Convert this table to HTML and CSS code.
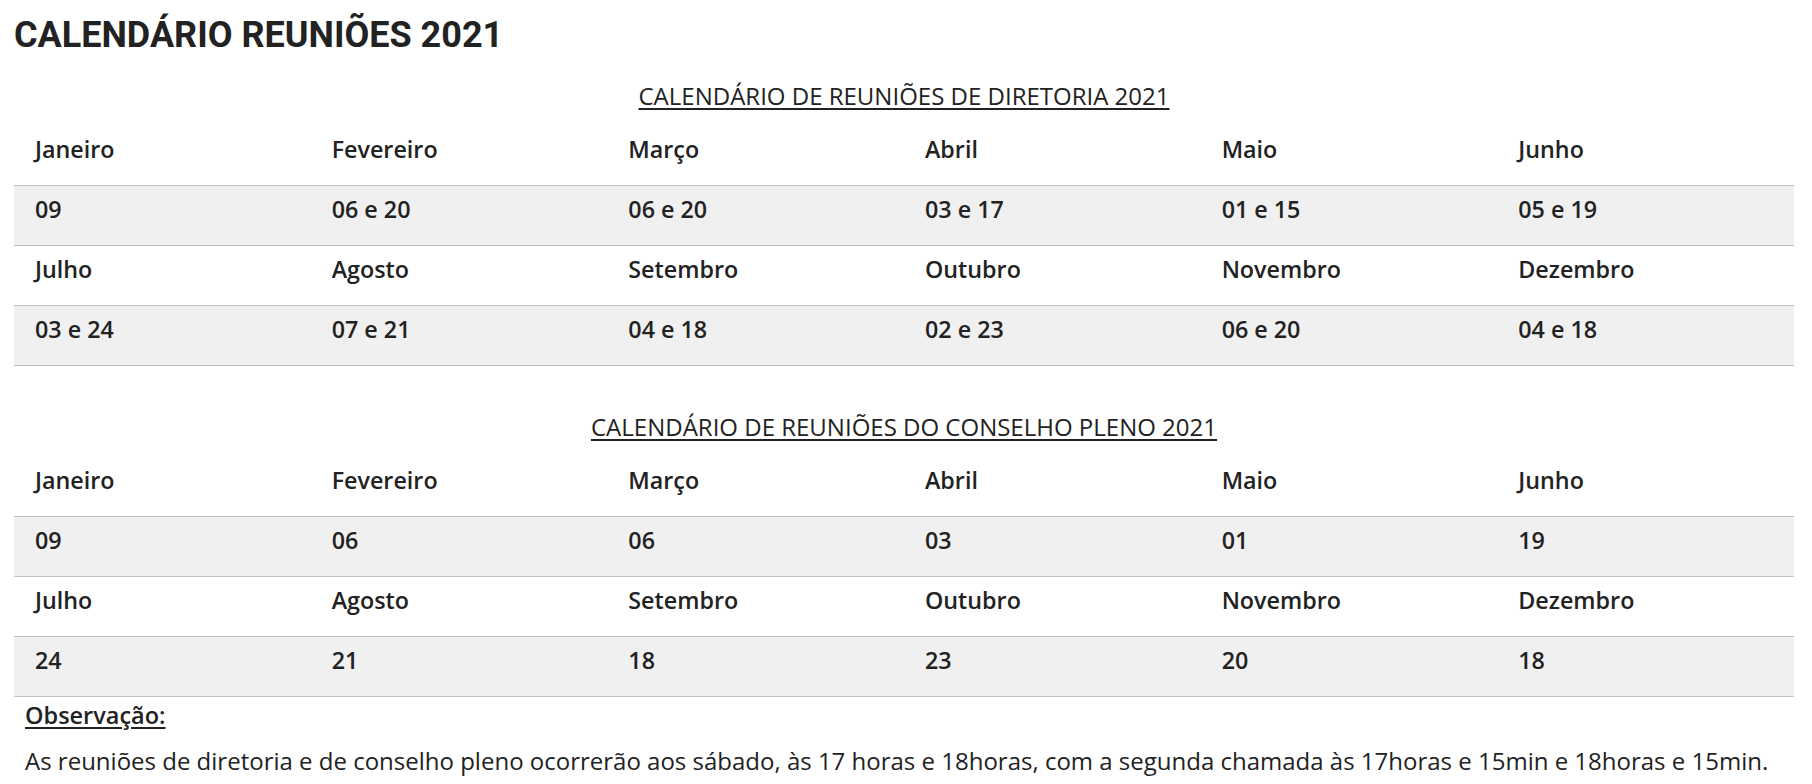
FILE: index.html
```html
<!DOCTYPE html>
<html lang="pt-BR">
<head>
<meta charset="utf-8">
<title>Calendário Reuniões 2021</title>
<link rel="stylesheet" href="styles.css">
</head>
<body>
<main class="page">
  <h1 class="title">CALENDÁRIO REUNIÕES 2021</h1>

  <h2 class="sub sub-first">CALENDÁRIO DE REUNIÕES DE DIRETORIA 2021</h2>
  <table class="cal">
    <tbody>
      <tr class="months"><td>Janeiro</td><td>Fevereiro</td><td>Março</td><td>Abril</td><td>Maio</td><td>Junho</td></tr>
      <tr class="dates"><td>09</td><td>06 e 20</td><td>06 e 20</td><td>03 e 17</td><td>01 e 15</td><td>05 e 19</td></tr>
      <tr class="months"><td>Julho</td><td>Agosto</td><td>Setembro</td><td>Outubro</td><td>Novembro</td><td>Dezembro</td></tr>
      <tr class="dates"><td>03 e 24</td><td>07 e 21</td><td>04 e 18</td><td>02 e 23</td><td>06 e 20</td><td>04 e 18</td></tr>
    </tbody>
  </table>

  <h2 class="sub sub-second">CALENDÁRIO DE REUNIÕES DO CONSELHO PLENO 2021</h2>
  <table class="cal">
    <tbody>
      <tr class="months"><td>Janeiro</td><td>Fevereiro</td><td>Março</td><td>Abril</td><td>Maio</td><td>Junho</td></tr>
      <tr class="dates"><td>09</td><td>06</td><td>06</td><td>03</td><td>01</td><td>19</td></tr>
      <tr class="months"><td>Julho</td><td>Agosto</td><td>Setembro</td><td>Outubro</td><td>Novembro</td><td>Dezembro</td></tr>
      <tr class="dates"><td>24</td><td>21</td><td>18</td><td>23</td><td>20</td><td>18</td></tr>
    </tbody>
  </table>

  <div class="note">
    <p class="note-title">Observação:</p>
    <p class="note-text">As reuniões de diretoria e de conselho pleno ocorrerão aos sábado, às 17 horas e 18horas, com a segunda chamada às 17horas e 15min e 18horas e 15min.</p>
  </div>
</main>
</body>
</html>
```
FILE: styles.css
```css
html, body {
  margin: 0;
  padding: 0;
  background: #ffffff;
}

body {
  font-family: "Open Sans", "Liberation Sans", sans-serif;
  color: #222222;
}

.page {
  padding: 14px 18px 0 14px;
}

.title {
  font-family: Roboto, "Liberation Sans", sans-serif;
  font-weight: 700;
  font-size: 36px;
  line-height: 43px;
  margin: 0;
  color: #222222;
}

.sub {
  font-size: 24px;
  font-weight: 400;
  line-height: 36px;
  text-align: center;
  text-decoration: underline;
  text-decoration-thickness: 2px;
  text-underline-offset: 3px;
  margin: 0 0 12px 0;
}

.sub-first {
  margin-top: 21px;
}

.sub-second {
  margin-top: 43px;
}

.cal {
  width: 100%;
  border-collapse: collapse;
  table-layout: fixed;
}

.cal td {
  font-size: 23.3px;
  font-weight: 600;
  line-height: 34px;
  padding: 6px 20px 19px 21px;
  border-bottom: 1px solid #bfbfbf;
  text-align: left;
  vertical-align: top;
}

.cal .dates td {
  background: #f0f0f0;
}

.note {
  padding-left: 11px;
}

.note-title {
  margin: 1px 0 0 0;
  font-size: 23.5px;
  font-weight: 600;
  line-height: 34px;
  text-decoration: underline;
  text-decoration-thickness: 2px;
  text-underline-offset: 3px;
}

.note-text {
  margin: 12px 0 0 0;
  font-size: 24px;
  font-weight: 400;
  line-height: 34px;
}
```
